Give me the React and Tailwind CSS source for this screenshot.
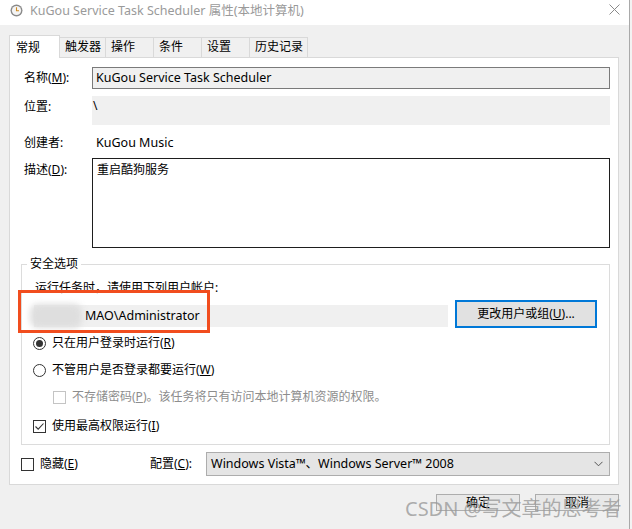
import React from 'react';

const tabs = ['常规', '触发器', '操作', '条件', '设置', '历史记录'];
const tabWidths = ['w-[51px]', 'w-[46px]', 'w-[48px]', 'w-[48px]', 'w-[48px]', 'w-[58px]'];

function Radio({ checked, children }) {
    return (
        <div className="flex items-center h-[16px] -ml-[2px]">
            <span className="w-[13px] h-[13px] rounded-full border border-[#333] bg-white flex items-center justify-center">
                {checked && <span className="w-[7px] h-[7px] rounded-full bg-[#333]" />}
            </span>
            <span className="ml-[6px]">{children}</span>
        </div>
    );
}

function Check({ checked, disabled, children, className = '' }) {
    return (
        <div className={`flex items-center h-[16px] ${className}`}>
            <span
                className={`w-[13px] h-[13px] border bg-white flex items-center justify-center ${
                    disabled ? 'border-[#c4c4c4]' : 'border-[#333]'
                }`}
            >
                {checked && (
                    <svg width="11" height="11" viewBox="0 0 11 11" fill="none">
                        <path d="M1.5 5.5 L4.2 8.2 L9.5 2.5" stroke="#333" strokeWidth="1.1" />
                    </svg>
                )}
            </span>
            <span className={`ml-[6px] ${disabled ? 'text-[#8d8d8d]' : ''}`}>{children}</span>
        </div>
    );
}

export default function App() {
    return (
        <div className="relative w-[632px] h-[529px] overflow-hidden bg-[#f3f3f3] text-[12px] leading-[16px] text-black font-['Noto_Sans','Noto_Sans_CJK_SC',sans-serif]">
            <div className="w-[630px] h-[529px] bg-[#f0f0f0] border-r border-[#a9a9a9] flex flex-col">
                {/* Title bar */}
                <div className="h-[25px] bg-white flex items-start pt-[2px] shrink-0">
                    <svg className="ml-[10px] mt-[2px]" width="13" height="13" viewBox="0 0 13 13">
                        <circle cx="6.5" cy="6.5" r="6" fill="#8a8a8a" />
                        <circle cx="6.5" cy="6.5" r="4.6" fill="#f4f4f4" />
                        <path d="M6.5 3.2 V6.7 H9" stroke="#d08a20" strokeWidth="1.1" fill="none" />
                    </svg>
                    <span className="ml-[7px] text-[#9a9a9a] text-[12.5px] leading-[18px]">KuGou Service Task Scheduler 属性(本地计算机)</span>
                    <svg className="ml-auto mr-[9px] mt-[2px]" width="11" height="11" viewBox="0 0 11 11">
                        <path d="M0.5 0.5 L10.5 10.5 M10.5 0.5 L0.5 10.5" stroke="#8a8a8a" strokeWidth="1" />
                    </svg>
                </div>

                {/* Tabs */}
                <div className="relative z-10 flex items-end ml-[9px] mt-[10px] h-[23px]">
                    {tabs.map((t, i) =>
                        i === 0 ? (
                            <div
                                key={t}
                                className={`${tabWidths[i]} h-[23px] bg-white border border-b-0 border-[#d9d9d9] pl-[6px] pt-[4px]`}
                            >
                                {t}
                            </div>
                        ) : (
                            <div
                                key={t}
                                className={`${tabWidths[i]} h-[20px] mb-px bg-[#f0f0f0] border border-b-0 border-l-0 border-[#d9d9d9] pl-[5px] pt-[1px]`}
                            >
                                {t}
                            </div>
                        )
                    )}
                </div>

                {/* Panel */}
                <div className="-mt-px ml-[9px] w-[610px] bg-white border border-[#d9d9d9] pl-[11px] pr-[8px] pt-[9px] pb-[8px]">
                    {/* name */}
                    <div className="flex items-center pl-[3px]">
                        <span className="w-[68px] shrink-0">名称(<u>M</u>):</span>
                        <div className="flex-1 h-[22px] bg-[#f0f0f0] border border-[#7a7a7a] pl-[3px] flex items-center text-[12.5px]">
                            KuGou Service Task Scheduler
                        </div>
                    </div>
                    {/* location */}
                    <div className="flex items-start pl-[3px] mt-[7px]">
                        <span className="w-[68px] shrink-0 pt-[3px]">位置:</span>
                        <div className="flex-1 h-[29px] bg-[#f0f0f0] pl-[1px] pt-[2px]">\</div>
                    </div>
                    {/* author */}
                    <div className="flex items-center pl-[3px] mt-[8px] h-[20px]">
                        <span className="w-[72px] shrink-0">创建者:</span>
                        <span className="text-[12.5px]">KuGou Music</span>
                    </div>
                    {/* description */}
                    <div className="flex items-start pl-[3px] mt-[5px]">
                        <span className="w-[68px] shrink-0 pt-[4px]">描述(<u>D</u>):</span>
                        <div className="flex-1 h-[90px] bg-white border border-[#1e1e1e] pl-[4px] pt-[3px]">重启酷狗服务</div>
                    </div>

                    {/* security options */}
                    <fieldset className="mt-[8px] border border-[#dcdcdc] pl-[13px] pr-[12px] pb-[10px]">
                        <legend className="-ml-[8px] px-[3px]">安全选项</legend>
                        <div className="mt-[8px]">运行任务时，请使用下列用户帐户:</div>
                        <div className="flex items-start mt-[4px]">
                            <div className="flex-1 h-[22px] mt-[5px] bg-[#f0f0f0] flex items-center -ml-px">
                                <span className="-ml-[4px] w-[52px] h-[24px] rounded-[8px] bg-[#dedede] blur-[3px]" />
                                <span className="ml-[3px] text-[12.5px]">MAO\Administrator</span>
                            </div>
                            <button className="ml-[7px] w-[142px] h-[28px] bg-[#e1e1e1] border-2 border-[#0078d7] text-[12px]">
                                更改用户或组(<u>U</u>)...
                            </button>
                        </div>
                        <div className="mt-[7px]">
                            <Radio checked>只在用户登录时运行(<u>R</u>)</Radio>
                        </div>
                        <div className="mt-[11px]">
                            <Radio>不管用户是否登录都要运行(<u>W</u>)</Radio>
                        </div>
                        <Check disabled className="mt-[11px] ml-[18px]">
                            不存储密码(<u>P</u>)。该任务将只有访问本地计算机资源的权限。
                        </Check>
                        <Check checked className="mt-[13px] -ml-[2px]">
                            使用最高权限运行(<u>I</u>)
                        </Check>
                    </fieldset>

                    {/* bottom row */}
                    <div className="flex items-center mt-[7px] h-[24px]">
                        <div className="w-[129px] shrink-0">
                            <Check>
                                隐藏(<u>E</u>)
                            </Check>
                        </div>
                        <span className="w-[56px] shrink-0">配置(<u>C</u>):</span>
                        <div className="flex-1 h-[24px] bg-[#e5e5e5] border border-[#adadad] flex items-center pl-[4px] pr-[6px]">
                            <span className="text-[12.5px]">Windows Vista™、Windows Server™ 2008</span>
                            <svg className="ml-auto" width="9" height="6" viewBox="0 0 9 6">
                                <path d="M0.5 0.8 L4.5 4.8 L8.5 0.8" stroke="#555" strokeWidth="1" fill="none" />
                            </svg>
                        </div>
                    </div>
                </div>

                {/* dialog buttons */}
                <div className="flex justify-end gap-[15px] mt-[9px] pr-[10px]">
                    <button className="w-[84px] h-[17px] bg-[#e8e8e8] border border-[#adadad] text-[12px] leading-[15px]">确定</button>
                    <button className="w-[84px] h-[17px] bg-[#e8e8e8] border border-[#adadad] text-[12px] leading-[15px]">取消</button>
                </div>
            </div>

            {/* annotation and watermark overlays */}
            <div className="absolute left-[18px] top-[290px] w-[192px] h-[43px] border-[3px] border-[#f14d1e]" />
            <div className="absolute left-[405px] top-[497px] text-[20px] leading-[24px] text-[#9a9a9a]/80 pointer-events-none whitespace-nowrap">
                CSDN @写文章的思考者
            </div>
        </div>
    );
}
